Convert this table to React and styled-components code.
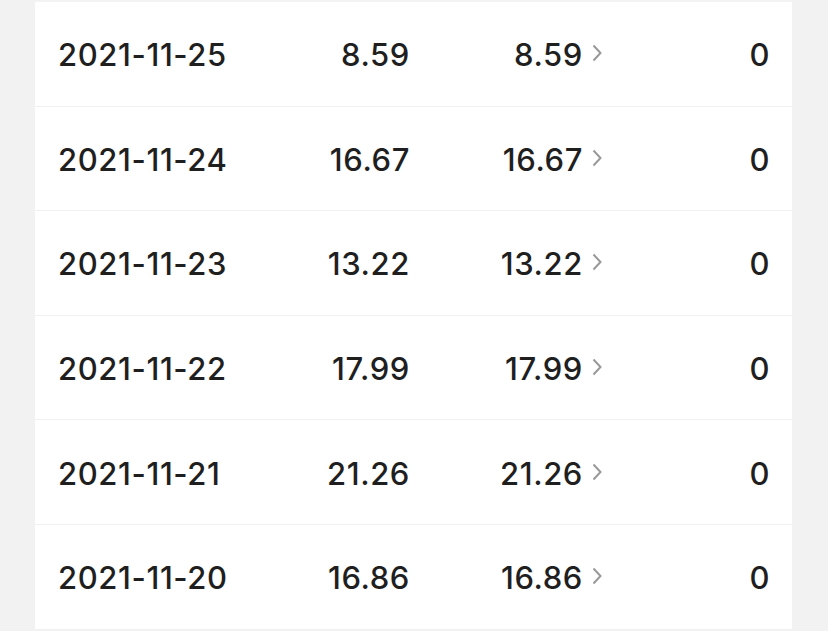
import React from 'react';
import styled, {createGlobalStyle} from 'styled-components';

const GlobalStyle = createGlobalStyle`
  html, body {
    margin: 0;
    padding: 0;
    background: #f2f2f2;
    font-family: Inter, "Noto Sans", sans-serif;
  }
`;

const Page = styled.div`
  width: 828px;
  height: 631px;
  overflow: hidden;
  padding: 0 35px 0 35px;
  box-sizing: border-box;
`;

const Card = styled.div`
  background: #ffffff;
  border-top: 1px solid #f4f4f4;
  margin-top: 1px;
  width: 757px;
`;

const Row = styled.div`
  display: grid;
  grid-template-columns: 200px 152px 173px 19px 1fr;
  align-items: center;
  box-sizing: border-box;
  height: 104.6px;
  padding: 2px 22px 0 23px;
  border-bottom: 1px solid #f1f1f1;
  color: #1f1f1f;
  font-size: 31px;
  font-weight: 500;
  letter-spacing: 0.6px;
`;

const Cell = styled.div`
  text-align: ${p => (p.$right ? 'right' : 'left')};
  white-space: nowrap;
`;

const Chevron = styled.svg`
  width: 10px;
  height: 18px;
  margin-left: 9px;
  margin-top: -3px;
`;

const rows = [
  ['2021-11-25', '8.59', '8.59', '0'],
  ['2021-11-24', '16.67', '16.67', '0'],
  ['2021-11-23', '13.22', '13.22', '0'],
  ['2021-11-22', '17.99', '17.99', '0'],
  ['2021-11-21', '21.26', '21.26', '0'],
  ['2021-11-20', '16.86', '16.86', '0'],
];

export default function App() {
  return (
    <Page>
      <GlobalStyle />
      <Card>
        {rows.map(([date, a, b, c]) => (
          <Row key={date}>
            <Cell>{date}</Cell>
            <Cell $right>{a}</Cell>
            <Cell $right>{b}</Cell>
            <Chevron viewBox="0 0 10 18">
              <path d="M1.5 1.5l7 7.5-7 7.5" fill="none" stroke="#999999" strokeWidth="2" />
            </Chevron>
            <Cell $right>{c}</Cell>
          </Row>
        ))}
      </Card>
    </Page>
  );
}
